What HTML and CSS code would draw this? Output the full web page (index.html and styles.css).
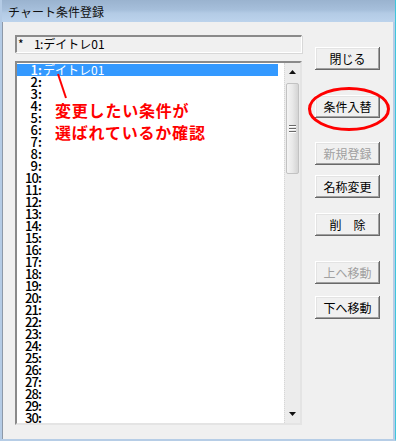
FILE: index.html
```html
<!DOCTYPE html>
<html lang="ja">
<head>
<meta charset="utf-8">
<title>チャート条件登録</title>
<link rel="stylesheet" href="styles.css">
</head>
<body>
<div class="window">
  <div class="titlebar"><span class="title">チャート条件登録</span></div>
  <div class="client">
    <div class="leftcol">
      <div class="textbox"><span class="star">*</span><span class="tnum">1</span>:デイトレ01</div>
      <div class="listbox">
        <ul class="list">
          <li class="sel"><span class="num">1</span><span class="colon">:</span>デイトレ01</li>
          <li><span class="num">2</span><span class="colon">:</span></li>
          <li><span class="num">3</span><span class="colon">:</span></li>
          <li><span class="num">4</span><span class="colon">:</span></li>
          <li><span class="num">5</span><span class="colon">:</span></li>
          <li><span class="num">6</span><span class="colon">:</span></li>
          <li><span class="num">7</span><span class="colon">:</span></li>
          <li><span class="num">8</span><span class="colon">:</span></li>
          <li><span class="num">9</span><span class="colon">:</span></li>
          <li><span class="num">10</span><span class="colon">:</span></li>
          <li><span class="num">11</span><span class="colon">:</span></li>
          <li><span class="num">12</span><span class="colon">:</span></li>
          <li><span class="num">13</span><span class="colon">:</span></li>
          <li><span class="num">14</span><span class="colon">:</span></li>
          <li><span class="num">15</span><span class="colon">:</span></li>
          <li><span class="num">16</span><span class="colon">:</span></li>
          <li><span class="num">17</span><span class="colon">:</span></li>
          <li><span class="num">18</span><span class="colon">:</span></li>
          <li><span class="num">19</span><span class="colon">:</span></li>
          <li><span class="num">20</span><span class="colon">:</span></li>
          <li><span class="num">21</span><span class="colon">:</span></li>
          <li><span class="num">22</span><span class="colon">:</span></li>
          <li><span class="num">23</span><span class="colon">:</span></li>
          <li><span class="num">24</span><span class="colon">:</span></li>
          <li><span class="num">25</span><span class="colon">:</span></li>
          <li><span class="num">26</span><span class="colon">:</span></li>
          <li><span class="num">27</span><span class="colon">:</span></li>
          <li><span class="num">28</span><span class="colon">:</span></li>
          <li><span class="num">29</span><span class="colon">:</span></li>
          <li><span class="num">30</span><span class="colon">:</span></li>
        </ul>
        <div class="scrollbar">
          <div class="arrow up"><svg width="7" height="4" viewBox="0 0 7 4"><path d="M3.5 0 L7 4 L0 4 Z" fill="#111"/></svg></div>
          <div class="track">
            <div class="thumb"><span class="grip"></span><span class="grip"></span><span class="grip"></span></div>
          </div>
          <div class="arrow down"><svg width="7" height="4" viewBox="0 0 7 4"><path d="M0 0 L7 0 L3.5 4 Z" fill="#111"/></svg></div>
        </div>
      </div>
    </div>
    <div class="buttons">
      <button class="btn b-close">閉じる</button>
      <button class="btn b-swap">条件入替</button>
      <button class="btn b-new" disabled>新規登録</button>
      <button class="btn b-rename">名称変更</button>
      <button class="btn b-del">削&emsp;除</button>
      <button class="btn b-up" disabled>上へ移動</button>
      <button class="btn b-down">下へ移動</button>
    </div>

    <svg class="pointer" width="20" height="30" viewBox="0 0 20 30"><line x1="2" y1="1" x2="10" y2="25" stroke="#ff0000" stroke-width="2"/></svg>
    <div class="note">変更したい条件が<br>選ばれているか確認</div>
    <svg class="ellipse" width="84" height="46" viewBox="0 0 84 46"><ellipse cx="42" cy="23" rx="39.5" ry="20.5" fill="none" stroke="#ff0000" stroke-width="3"/></svg>
  </div>
</div>
</body>
</html>
```

FILE: styles.css
```css
html, body {
  margin: 0;
  padding: 0;
}
body {
  width: 396px;
  height: 441px;
  overflow: hidden;
  background: #f0f0f0;
  font-family: "Noto Sans CJK JP", "Noto Sans", sans-serif;
  font-size: 12px;
  color: #000;
}
.window {
  width: 396px;
  height: 441px;
  box-sizing: border-box;
  display: flex;
  flex-direction: column;
  border-left: 2px solid #b4cbe5;
  border-right: 1px solid #3ec6dc;
  border-bottom: 2px solid #b6cde6;
  background: #b6cde6;
}
.titlebar {
  height: 22px;
  flex: none;
  background: linear-gradient(to bottom, #9ab3cf 0%, #a6bfdb 45%, #b3cbe5 60%, #bcd3ec 100%);
  display: flex;
  align-items: center;
  padding-left: 6px;
}
.title {
  font-size: 12px;
  line-height: 14px;
  color: #111;
  margin-top: 1px;
}
.client {
  position: relative;
  flex: 1;
  background: #f0f0f0;
  border-left: 1px solid #8d99a8;
  margin-right: 2px;
  display: flex;
  gap: 13px;
  padding: 13px 0 0 12px;
}
.leftcol {
  width: 287px;
  display: flex;
  flex-direction: column;
  gap: 8px;
}
.textbox {
  height: 18px;
  box-sizing: border-box;
  border-top: 2px solid #8a8a8a;
  border-left: 2px solid #8a8a8a;
  border-right: 1px solid #fff;
  border-bottom: 1px solid #fff;
  box-shadow: 1px 1px 0 #d8d8d8;
  background: #f0f0f0;
  line-height: 14px;
  padding-left: 1px;
  white-space: nowrap;
}
.star {
  display: inline-block;
  width: 16px;
}
.tnum {
  display: inline-block;
  width: 6px;
  text-align: right;
}
.listbox {
  height: 364px;
  box-sizing: border-box;
  border-top: 2px solid #8a8a8a;
  border-left: 2px solid #8a8a8a;
  border-right: 2px solid #e4e4e4;
  border-bottom: 2px solid #e4e4e4;
  background: #fff;
  display: flex;
  overflow: hidden;
}
.list {
  list-style: none;
  margin: 0;
  padding: 1px 0 0 0;
  flex: 1;
  overflow: hidden;
}
.list li {
  height: 12px;
  line-height: 12px;
  font-size: 12px;
  margin-right: 6px;
  padding-left: 8px;
  white-space: nowrap;
  display: flex;
  align-items: center;
}
.list li.sel {
  background: #3399ff;
  color: #fff;
}
.num {
  display: inline-block;
  width: 12px;
  text-align: right;
  font-size: 13px;
  line-height: 12px;
  letter-spacing: -1px;
  font-weight: 500;
}
.colon {
  display: inline-block;
  width: 6px;
  text-align: center;
  font-weight: bold;
  font-size: 12px;
}
.scrollbar {
  width: 15px;
  flex: none;
  background: #ececec;
  border-left: 1px dotted #d6d6d6;
  display: flex;
  flex-direction: column;
}
.arrow {
  height: 18px;
  display: flex;
  align-items: center;
  justify-content: center;
  flex: none;
}
.track {
  flex: 1;
  padding-top: 2px;
}
.thumb {
  margin: 0 1px;
  height: 91px;
  box-sizing: border-box;
  border: 1px solid #c2c2c2;
  border-radius: 2px;
  background: linear-gradient(to right, #f4f4f4 0%, #e8e8e8 50%, #d4d4d4 100%);
  display: flex;
  flex-direction: column;
  align-items: center;
  justify-content: center;
  gap: 1px;
}
.grip {
  width: 7px;
  height: 1px;
  background: #6a6a6a;
  border-bottom: 1px solid #fff;
}
.buttons {
  width: 65px;
  display: flex;
  flex-direction: column;
  padding-top: 12px;
}
.btn {
  height: 23px;
  width: 65px;
  box-sizing: border-box;
  font-family: "Noto Sans CJK JP", sans-serif;
  font-size: 12px;
  line-height: 14px;
  color: #000;
  background: #f0f0f0;
  border: none;
  padding: 0;
  box-shadow: inset -1px -1px 0 #696969, inset 1px 1px 0 #ffffff, inset -2px -2px 0 #a0a0a0, inset 2px 2px 0 #e3e3e3;
}
.btn:disabled {
  color: #a0a0a0;
}
.b-swap { margin-top: 25px; }
.b-new { margin-top: 24px; }
.b-rename { margin-top: 10px; }
.b-del { margin-top: 15px; }
.b-up { margin-top: 25px; }
.b-down { margin-top: 12px; }

.pointer {
  position: absolute;
  left: 53px;
  top: 51px;
}
.note {
  position: absolute;
  left: 52px;
  top: 77px;
  color: #ff0000;
  font-size: 16px;
  font-weight: bold;
  line-height: 22px;
  letter-spacing: 0.8px;
  white-space: nowrap;
}
.ellipse {
  position: absolute;
  left: 304px;
  top: 64px;
}
```
